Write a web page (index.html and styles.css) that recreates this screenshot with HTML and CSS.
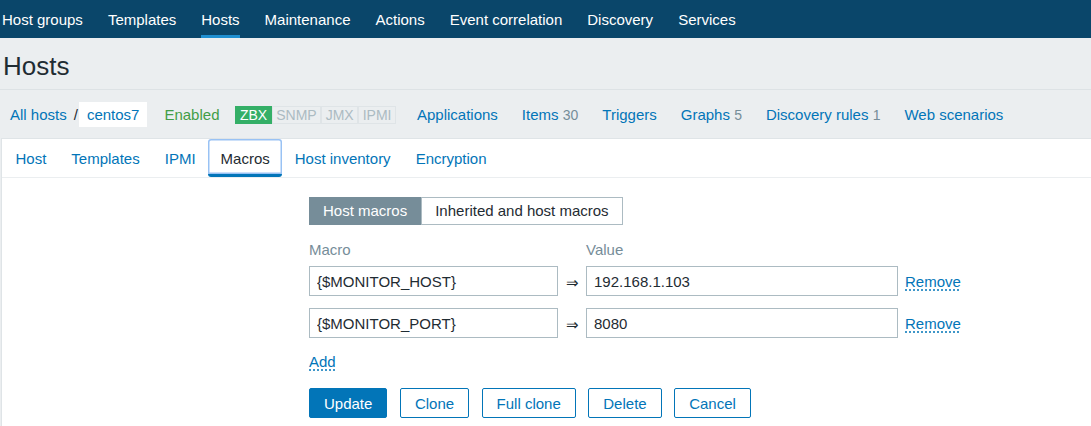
FILE: index.html
```html
<!DOCTYPE html>
<html lang="en">
<head>
<meta charset="utf-8">
<title>Hosts</title>
<link rel="stylesheet" href="styles.css">
</head>
<body>
<nav class="topnav">
  <ul>
    <li><a href="#">Host groups</a></li>
    <li><a href="#">Templates</a></li>
    <li><a href="#" class="active">Hosts</a></li>
    <li><a href="#">Maintenance</a></li>
    <li><a href="#">Actions</a></li>
    <li><a href="#">Event correlation</a></li>
    <li><a href="#">Discovery</a></li>
    <li><a href="#">Services</a></li>
  </ul>
</nav>
<main>
  <header class="title"><h1>Hosts</h1></header>
  <div class="crumbs">
    <a href="#" class="link">All hosts</a>
    <span class="sep">/</span>
    <span class="current">centos7</span>
    <span class="enabled">Enabled</span>
    <span class="badges">
      <span class="badge on">ZBX</span><span class="badge">SNMP</span><span class="badge">JMX</span><span class="badge">IPMI</span>
    </span>
    <ul class="sublinks">
      <li><a href="#" class="link">Applications</a></li>
      <li><a href="#" class="link">Items</a> <span class="count">30</span></li>
      <li><a href="#" class="link">Triggers</a></li>
      <li><a href="#" class="link">Graphs</a> <span class="count">5</span></li>
      <li><a href="#" class="link">Discovery rules</a> <span class="count">1</span></li>
      <li><a href="#" class="link">Web scenarios</a></li>
    </ul>
  </div>
  <section class="panel">
    <ul class="tabs">
      <li><a href="#">Host</a></li>
      <li><a href="#">Templates</a></li>
      <li><a href="#">IPMI</a></li>
      <li><a href="#" class="selected">Macros</a></li>
      <li><a href="#">Host inventory</a></li>
      <li><a href="#">Encryption</a></li>
    </ul>
    <form class="form">
      <div class="label-col"></div>
      <div class="field-col">
        <div class="segmented">
          <span class="seg active">Host macros</span><span class="seg">Inherited and host macros</span>
        </div>
        <div class="macro-table">
          <div class="mrow head">
            <span class="th">Macro</span><span></span><span class="th">Value</span><span></span>
          </div>
          <div class="mrow">
            <input class="input" type="text" value="{$MONITOR_HOST}">
            <span class="arrow">&rArr;</span>
            <input class="input" type="text" value="192.168.1.103">
            <a href="#" class="dotted remove">Remove</a>
          </div>
          <div class="mrow last">
            <input class="input" type="text" value="{$MONITOR_PORT}">
            <span class="arrow">&rArr;</span>
            <input class="input" type="text" value="8080">
            <a href="#" class="dotted remove">Remove</a>
          </div>
        </div>
        <div class="add-row"><a href="#" class="dotted">Add</a></div>
        <div class="buttons">
          <button type="button" class="btn primary">Update</button>
          <button type="button" class="btn">Clone</button>
          <button type="button" class="btn">Full clone</button>
          <button type="button" class="btn">Delete</button>
          <button type="button" class="btn">Cancel</button>
        </div>
      </div>
    </form>
  </section>
</main>
</body>
</html>
```

FILE: styles.css
```css
* { box-sizing: border-box; }

body {
  margin: 0;
  background: #ebeef0;
  font-family: "Liberation Sans", Arial, sans-serif;
  font-size: 15px;
  color: #1f2c33;
  overflow: hidden;
}

ul { list-style: none; margin: 0; padding: 0; }
a { text-decoration: none; }

/* top navigation */
.topnav {
  background: #0a466a;
  height: 38px;
}
.topnav ul {
  display: flex;
  gap: 25px;
  padding-left: 2px;
}
.topnav a {
  display: block;
  color: #fff;
  padding-top: 4px;
  line-height: 31px;
  border-bottom: 3px solid transparent;
}
.topnav a.active { border-bottom-color: #1f8fd1; }

/* title */
.title {
  height: 52px;
  padding: 13px 3px 0;
  border-bottom: 1px solid #dde2e5;
}
.title h1 {
  margin: 0;
  font-size: 26px;
  font-weight: normal;
  line-height: 30px;
  color: #1f2c33;
}

/* breadcrumbs row */
.crumbs {
  height: 48px;
  display: flex;
  align-items: center;
  padding: 1px 0 0 10px;
}
.link { color: #0275b8; }
.sep { margin: 0 1px 0 7px; color: #1f2c33; }
.current {
  background: #fff;
  color: #0275b8;
  padding: 0 8px;
  line-height: 25px;
  height: 25px;
}
.enabled { color: #429e47; margin-left: 17px; }
.badges { display: flex; margin-left: 16px; }
.badge {
  font-size: 14px;
  line-height: 16px;
  padding: 0 3.5px;
  border: 1px solid #dfe4e7;
  color: #acbbc2;
  background: #ebeef0;
}
.badge.on {
  background: #34af67;
  border-color: #34af67;
  color: #fff;
}
.sublinks { display: flex; gap: 24px; margin-left: 21px; }
.count { color: #768d99; font-size: 14px; }

/* panel */
.panel {
  margin-left: 1px;
  background: #fff;
  border-top: 1px solid #dfe4e7;
  border-left: 1px solid #dfe4e7;
  min-height: calc(100vh - 138px);
}
.tabs {
  display: flex;
  padding-left: 1px;
  border-bottom: 1px solid #ebeef0;
}
.tabs a {
  display: block;
  color: #0275b8;
  padding: 4px 12.5px 0;
  line-height: 31px;
  border-bottom: 3px solid transparent;
}
.tabs a.selected {
  color: #1f2c33;
  border-bottom-color: #0275b8;
  border-radius: 3px;
  box-shadow: inset 0 0 0 1.5px #99c2f4;
}

/* form */
.form {
  display: grid;
  grid-template-columns: 282px 1fr;
  column-gap: 25px;
  padding-top: 19px;
}
.segmented { display: flex; }
.seg {
  height: 28px;
  line-height: 26px;
  padding: 0 13px;
  border: 1px solid #acbbc2;
  background: #fff;
  color: #1f2c33;
}
.seg.active {
  background: #768d99;
  border-color: #768d99;
  color: #fff;
}

.macro-table { margin-top: 16px; }
.mrow {
  display: grid;
  grid-template-columns: 249px 28px 312px auto;
  align-items: center;
  margin-bottom: 12px;
}
.mrow.head { margin-bottom: 7px; }
.mrow.last { margin-bottom: 0; }
.th { color: #768d99; line-height: 18px; }
.input {
  height: 30px;
  width: 100%;
  border: 1px solid #acbbc2;
  padding: 0 7px;
  font: inherit;
  color: #1f2c33;
  background: #fff;
}
.arrow { text-align: center; padding-top: 3px; }
.dotted {
  color: #0275b8;
  text-decoration: underline dotted #0275b8;
  text-underline-offset: 3px;
}
.remove { margin-left: 7px; justify-self: start; }

.add-row { margin-top: 15px; line-height: 18px; }

.buttons {
  display: flex;
  gap: 12.5px;
  margin-top: 17px;
}
.btn {
  height: 30px;
  padding: 0 14px;
  border: 1px solid #0275b8;
  border-radius: 2px;
  background: #fff;
  color: #0275b8;
  font: inherit;
}
.btn.primary { background: #0275b8; color: #fff; }
```
